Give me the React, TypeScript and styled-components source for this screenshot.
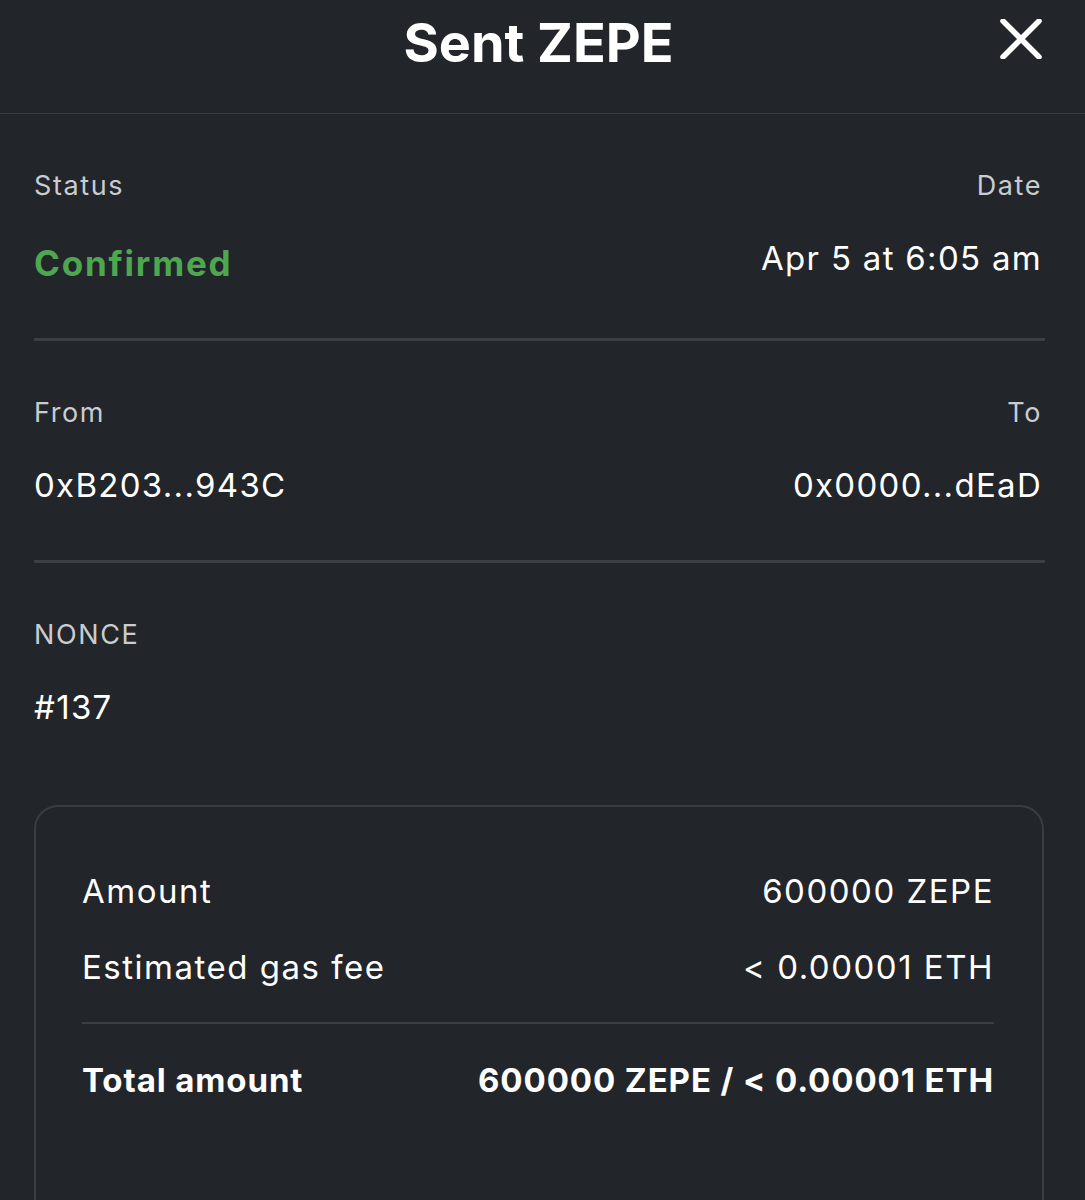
import styled, { createGlobalStyle } from "styled-components";

const GlobalStyle = createGlobalStyle`
	html, body {
		margin: 0;
		padding: 0;
		background: #222529;
	}
	body {
		font-family: Inter, "Open Sans", sans-serif;
		color: #ffffff;
	}
`;

const App = () => {
	return (
		<Page>
			<GlobalStyle />
			<Header>
				<Title>Sent ZEPE</Title>
				<CloseButton aria-label="Close">
					<svg width="42" height="40" viewBox="0 0 42 40" fill="none">
						<path d="M3 2 L39 38 M39 2 L3 38" stroke="#fff" strokeWidth="5.5" strokeLinecap="round" />
					</svg>
				</CloseButton>
			</Header>
			<Body>
				<Section>
					<Row>
						<Label>Status</Label>
						<Label>Date</Label>
					</Row>
					<Row>
						<Status>Confirmed</Status>
						<Value>Apr 5 at 6:05 am</Value>
					</Row>
				</Section>
				<Divider />
				<Section>
					<Row>
						<Label>From</Label>
						<Label>To</Label>
					</Row>
					<Row>
						<Value>0xB203...943C</Value>
						<Value>0x0000...dEaD</Value>
					</Row>
				</Section>
				<Divider />
				<Section $last>
					<Row>
						<Label>NONCE</Label>
					</Row>
					<Row>
						<Value>#137</Value>
					</Row>
				</Section>
				<SummaryCard>
					<SummaryRow>
						<SummaryText>Amount</SummaryText>
						<SummaryText>600000 ZEPE</SummaryText>
					</SummaryRow>
					<SummaryRow>
						<SummaryText>Estimated gas fee</SummaryText>
						<SummaryText>&lt; 0.00001 ETH</SummaryText>
					</SummaryRow>
					<CardDivider />
					<SummaryRow>
						<SummaryText $bold>Total amount</SummaryText>
						<SummaryText $bold>600000 ZEPE / &lt; 0.00001 ETH</SummaryText>
					</SummaryRow>
				</SummaryCard>
			</Body>
		</Page>
	);
};

export default App;

const Page = styled.div`
	width: 1085px;
	height: 1200px;
	overflow: hidden;
	background: #222529;
`;

const Header = styled.div`
	position: relative;
	height: 114px;
	display: flex;
	justify-content: center;
	align-items: flex-start;
	padding-right: 8px;
	border-bottom: 1px solid #393c40;
	box-sizing: border-box;
`;

const Title = styled.h1`
	margin: 10px 0 0;
	font-size: 54px;
	font-weight: 700;
	line-height: 66px;
	color: #ffffff;
`;

const CloseButton = styled.button`
	position: absolute;
	top: 19px;
	right: 43px;
	padding: 0;
	border: none;
	background: none;
	cursor: pointer;
	line-height: 0;
`;

const Body = styled.div`
	padding: 55px 43px 0 34px;
`;

const Section = styled.div<{ $last?: boolean }>`
	display: flex;
	flex-direction: column;
	gap: 33px;
	padding-bottom: ${(p) => (p.$last ? 76 : 53)}px;
`;

const Row = styled.div`
	display: flex;
	justify-content: space-between;
	align-items: flex-start;
`;

const Label = styled.span`
	font-size: 27px;
	line-height: 34px;
	letter-spacing: 1.6px;
	color: #c9ccd0;
`;

const Value = styled.span`
	font-size: 33px;
	line-height: 44px;
	letter-spacing: 1.3px;
	color: #ffffff;
`;

const Status = styled.span`
	margin-top: 5px;
	font-size: 35px;
	line-height: 44px;
	font-weight: 700;
	letter-spacing: 1.8px;
	color: #4ea64f;
`;

const Divider = styled.div`
	height: 3px;
	margin: 0 -3px 55px 0;
	background: #3c3f43;
`;

const SummaryCard = styled.div`
	margin-right: -2px;
	height: 420px;
	padding: 61px 48px 0 46px;
	border: 2px solid #3a3d41;
	border-bottom: none;
	border-radius: 24px 24px 0 0;
	display: flex;
	flex-direction: column;
`;

const SummaryRow = styled.div`
	display: flex;
	justify-content: space-between;
	align-items: center;
	& + & {
		margin-top: 30px;
	}
`;

const SummaryText = styled.span<{ $bold?: boolean }>`
	font-size: 33px;
	line-height: 46px;
	font-weight: ${(p) => (p.$bold ? 700 : 400)};
	letter-spacing: ${(p) => (p.$bold ? 0.9 : 1.5)}px;
	color: #ffffff;
`;

const CardDivider = styled.div`
	height: 2px;
	margin: 32px 0 33px;
	background: #3c3f43;
`;
